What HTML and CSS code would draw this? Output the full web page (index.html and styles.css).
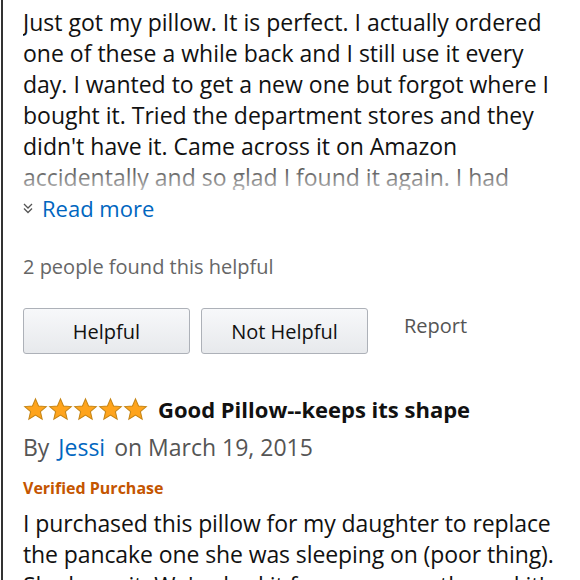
FILE: index.html
```html
<!DOCTYPE html>
<html>
<head>
<meta charset="utf-8">
<link rel="stylesheet" href="styles.css">
</head>
<body>
<div class="page">
  <div class="review">
    <div class="body-wrap">
      <p class="body">Just got my pillow. It is perfect. I actually ordered<br>one of these a while back and I still use it every<br>day. I wanted to get a new one but forgot where I<br>bought it. Tried the department stores and they<br>didn't have it. Came across it on Amazon<br>accidentally and so glad I found it again. I had</p>
      <div class="fade"></div>
    </div>
    <div class="readmore"><svg class="chev" width="10" height="12" viewBox="0 0 10 12"><path d="M1 2 L5 6 L9 2 M1 6.5 L5 10.5 L9 6.5" fill="none" stroke="#555" stroke-width="1.3"/></svg><span>Read more</span></div>
    <div class="helpful-count">2 people found this helpful</div>
    <div class="actions">
      <button class="btn">Helpful</button>
      <button class="btn">Not Helpful</button>
      <span class="report">Report</span>
    </div>
  </div>
  <div class="review">
    <div class="title-row">
      <div class="stars">
        <svg class="star" viewBox="0 0 24 24"><path d="M12 1.8 L14.9 8.6 L22.3 9.2 L16.7 14 L18.4 21.3 L12 17.4 L5.6 21.3 L7.3 14 L1.7 9.2 L9.1 8.6 Z"/></svg>
        <svg class="star" viewBox="0 0 24 24"><path d="M12 1.8 L14.9 8.6 L22.3 9.2 L16.7 14 L18.4 21.3 L12 17.4 L5.6 21.3 L7.3 14 L1.7 9.2 L9.1 8.6 Z"/></svg>
        <svg class="star" viewBox="0 0 24 24"><path d="M12 1.8 L14.9 8.6 L22.3 9.2 L16.7 14 L18.4 21.3 L12 17.4 L5.6 21.3 L7.3 14 L1.7 9.2 L9.1 8.6 Z"/></svg>
        <svg class="star" viewBox="0 0 24 24"><path d="M12 1.8 L14.9 8.6 L22.3 9.2 L16.7 14 L18.4 21.3 L12 17.4 L5.6 21.3 L7.3 14 L1.7 9.2 L9.1 8.6 Z"/></svg>
        <svg class="star" viewBox="0 0 24 24"><path d="M12 1.8 L14.9 8.6 L22.3 9.2 L16.7 14 L18.4 21.3 L12 17.4 L5.6 21.3 L7.3 14 L1.7 9.2 L9.1 8.6 Z"/></svg>
      </div>
      <span class="title">Good Pillow--keeps its shape</span>
    </div>
    <div class="byline">By <a class="author">Jessi</a> on March 19, 2015</div>
    <div class="verified">Verified Purchase</div>
    <p class="body2">I purchased this pillow for my daughter to replace<br>the pancake one she was sleeping on (poor thing).<br>She loves it. We've had it for many months and it's</p>
  </div>
</div>
</body>
</html>
```
FILE: styles.css
```css
html, body {
  margin: 0;
  padding: 0;
  background: #fff;
}
body {
  width: 580px;
  height: 580px;
  overflow: hidden;
  font-family: "Open Sans", "Noto Sans", sans-serif;
  color: #111;
}
.page {
  border-left: 2px solid #333;
  margin-left: 1px;
  height: 580px;
  padding-left: 20px;
  padding-right: 10px;
  box-sizing: border-box;
}
.body-wrap {
  position: relative;
  height: 190px;
  overflow: hidden;
}
.body, .body2 {
  margin: 0;
  font-size: 23px;
  line-height: 31px;
  padding-top: 7px;
  white-space: nowrap;
}
.fade {
  position: absolute;
  left: 0;
  right: 0;
  bottom: 0;
  height: 36px;
  background: linear-gradient(rgba(255,255,255,0), rgba(255,255,255,0.7));
}
.readmore {
  display: flex;
  align-items: center;
  gap: 9px;
  height: 36px;
  color: #0066c0;
  font-size: 22px;
}
.helpful-count {
  margin-top: 27px;
  font-size: 20px;
  color: #666;
}
.actions {
  display: flex;
  align-items: flex-start;
  margin-top: 28px;
  gap: 11px;
}
.btn {
  width: 167px;
  height: 46px;
  border: 1px solid #adb1b8;
  border-radius: 3px;
  background: linear-gradient(#f7f8fa, #e7e9ec);
  font-family: inherit;
  font-size: 20px;
  color: #111;
  padding: 0;
}
.report {
  margin-left: 25px;
  margin-top: 4px;
  font-size: 20px;
  color: #555;
}
.review + .review {
  margin-top: 40px;
}
.title-row {
  display: flex;
  align-items: center;
  gap: 10px;
  height: 30px;
}
.stars {
  display: flex;
  gap: 0;
}
.star {
  width: 25px;
  height: 25px;
  fill: #ffa41c;
  stroke: #c58414;
  stroke-width: 1;
}
.title {
  font-weight: 700;
  font-size: 22px;
}
.byline {
  margin-top: 7px;
  font-size: 23px;
  color: #555;
}
.author {
  color: #0066c0;
  margin: 0 3px;
}
.verified {
  margin-top: 14px;
  font-size: 16px;
  font-weight: 700;
  color: #c45500;
}
.body2 {
  padding-top: 9px;
  letter-spacing: -0.1px;
}
```
